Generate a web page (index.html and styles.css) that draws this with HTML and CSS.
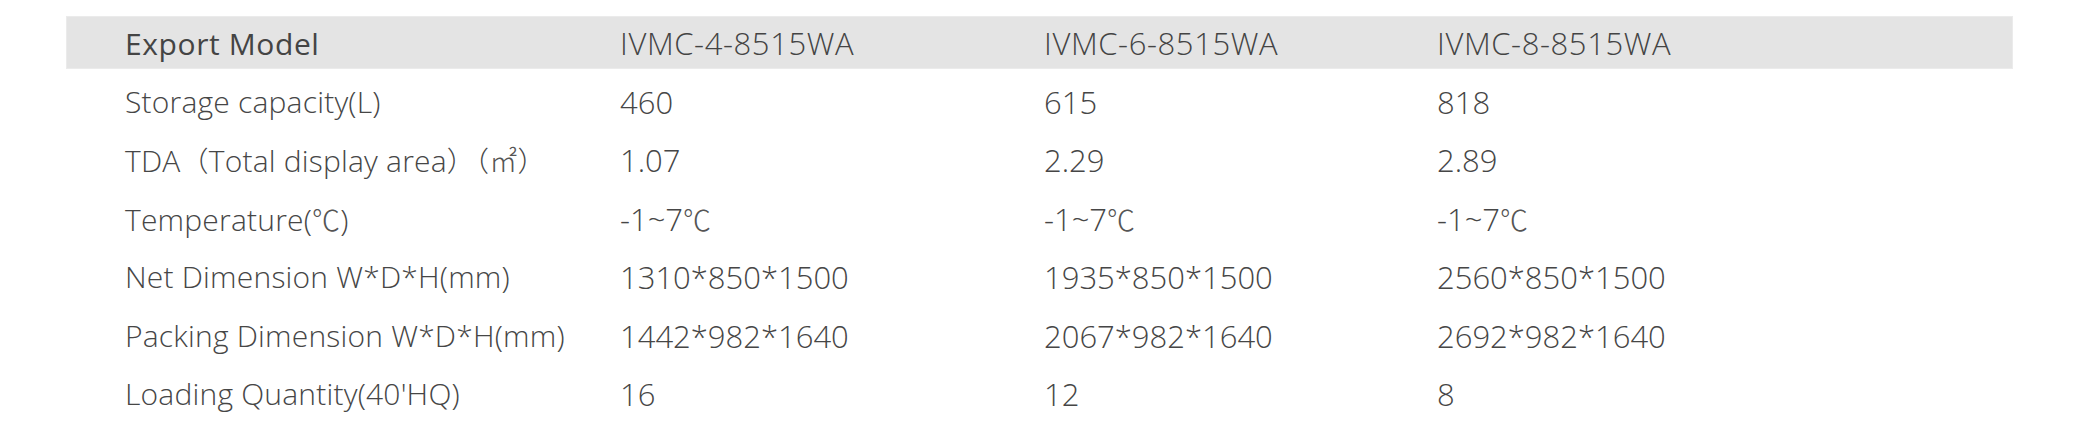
FILE: index.html
```html
<!DOCTYPE html>
<html>
<head>
<meta charset="utf-8">
<link rel="stylesheet" href="styles.css">
</head>
<body>
<div class="spec">
  <div class="row head">
    <div class="cell label">Export Model</div>
    <div class="cell">IVMC-4-8515WA</div>
    <div class="cell">IVMC-6-8515WA</div>
    <div class="cell">IVMC-8-8515WA</div>
  </div>
  <div class="body">
    <div class="row">
      <div class="cell label">Storage capacity(L)</div>
      <div class="cell">460</div>
      <div class="cell">615</div>
      <div class="cell">818</div>
    </div>
    <div class="row">
      <div class="cell label">TDA<span class="cjk">（</span>Total display area<span class="cjk">）（</span><span class="sym">㎡</span><span class="cjk">）</span></div>
      <div class="cell">1.07</div>
      <div class="cell">2.29</div>
      <div class="cell">2.89</div>
    </div>
    <div class="row">
      <div class="cell label">Temperature(<span class="sym">℃</span>)</div>
      <div class="cell">-1~7<span class="sym">℃</span></div>
      <div class="cell">-1~7<span class="sym">℃</span></div>
      <div class="cell">-1~7<span class="sym">℃</span></div>
    </div>
    <div class="row">
      <div class="cell label">Net Dimension W*D*H(mm)</div>
      <div class="cell">1310*850*1500</div>
      <div class="cell">1935*850*1500</div>
      <div class="cell">2560*850*1500</div>
    </div>
    <div class="row">
      <div class="cell label">Packing Dimension W*D*H(mm)</div>
      <div class="cell">1442*982*1640</div>
      <div class="cell">2067*982*1640</div>
      <div class="cell">2692*982*1640</div>
    </div>
    <div class="row">
      <div class="cell label">Loading Quantity(40'HQ)</div>
      <div class="cell">16</div>
      <div class="cell">12</div>
      <div class="cell">8</div>
    </div>
  </div>
</div>
</body>
</html>
```
FILE: styles.css
```css
html, body {
  margin: 0;
  padding: 0;
  background: #ffffff;
}

.spec {
  margin: 16px 0 0 66px;
  width: 1947px;
  font-family: "Open Sans", "Noto Sans CJK SC", sans-serif;
  font-weight: 300;
  font-size: 31px;
  color: #464646;
}

.body {
  padding-top: 4px;
}

.row {
  display: grid;
  grid-template-columns: 495px 424px 393px 1fr;
  padding-left: 59px;
  height: 58.4px;
  line-height: 58.4px;
  white-space: nowrap;
}

.cell.label {
  font-size: 30px;
  letter-spacing: 0.2px;
}

.row.head {
  height: 53px;
  line-height: 55px;
  background: #e4e4e4;
  box-shadow: inset 0 0 0 1px #ebebeb;
  color: #444444;
  letter-spacing: 0.6px;
}

.row.head .cell.label {
  font-weight: 400;
  letter-spacing: 0.6px;
}

.cjk {
  font-family: "Noto Sans CJK SC", sans-serif;
  font-weight: 300;
  font-size: 28px;
}

.sym {
  font-family: "Noto Sans CJK SC", sans-serif;
  font-weight: 200;
  font-size: 28px;
  color: #555555;
}
```
